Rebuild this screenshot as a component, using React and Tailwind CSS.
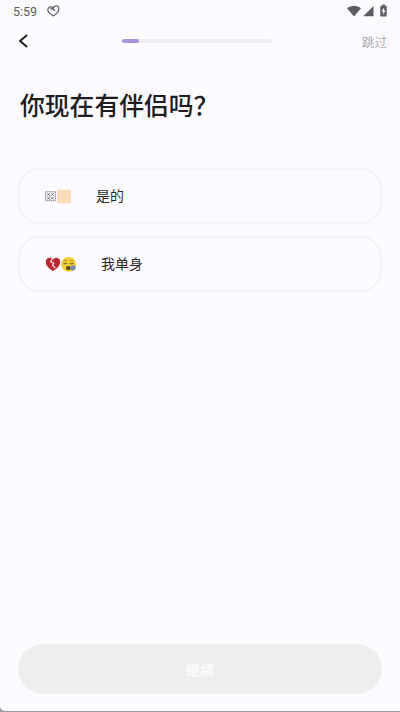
import React from 'react';

function StatusBar() {
  return (
    <div className="flex h-[22px] items-center pl-[13px] pr-[12px] text-[#5c5b5e]">
      <span className="relative top-px font-[Roboto,sans-serif] text-[12.5px] leading-[22px]">5:59</span>
      <svg className="ml-[10px]" width="14" height="12" viewBox="0 0 14 12" fill="none" stroke="currentColor" strokeWidth="1.200" strokeLinecap="round" strokeLinejoin="round">
        <path d="M3.800 3.300C4.600 4.700 5.900 4.300 5.600 2.700C5.200 1.400 3.200 1.400 1.800 2.700C.2 4.400.700 6.500 2.300 7.900C3.500 8.900 4.800 9.800 6.200 10.900C8.800 9.500 11.900 6.900 11.900 3.600C11.900 1.500 10.200.600 8.500 1C6.800 1.400 5.900 2.600 6.100 4.200C6.300 5.200 7.200 5.600 7.700 5" />
      </svg>
      <div className="ml-auto flex items-center">
        <svg width="14" height="12" viewBox="0 0 14 12" fill="currentColor">
          <path d="M0 3.300C4-.2 10-.2 14 3.300L7 11.500Z" />
        </svg>
        <svg className="ml-[2px]" width="11" height="12" viewBox="0 0 11 12" fill="currentColor">
          <path d="M10.500 1V11.300H.3Z" />
        </svg>
        <svg className="ml-[6px] -mt-px" width="8" height="13" viewBox="0 0 8 13">
          <path d="M2.200.5H4.800V1.700H6Q6.700 1.700 6.700 2.400V11.700Q6.700 12.400 6 12.400H1Q.3 12.400.3 11.700V2.400Q.3 1.700 1 1.700H2.200Z" fill="currentColor" />
          <path d="M4.100 3.400L1.600 7.600H3.100V10.700L5.500 6.400H4.100Z" fill="#fdfbff" />
        </svg>
      </div>
    </div>
  );
}

function CoupleIcon() {
  return (
    <svg className="shrink-0" width="26" height="16" viewBox="0 0 26 16">
      <rect x=".5" y="3.700" width="10" height="9" fill="none" stroke="#77767a" strokeWidth=".8" strokeDasharray="1.500 .5" />
      <path d="M2 4.800L5 7.900M5 4.800L2 7.900M6 4.800L9 7.900M9 4.800L6 7.900M2 8.500L5 11.600M5 8.500L2 11.600M6 8.500L9 11.600M9 8.500L6 11.600" stroke="#656468" strokeWidth=".8" fill="none" />
      <rect x="12.100" y="1.700" width="13.900" height="13.700" rx=".5" fill="#fbdcb9" />
    </svg>
  );
}

function SingleIcon() {
  return (
    <svg className="shrink-0" width="31" height="16" viewBox="0 0 31 16">
      <path d="M8 15.300C4.500 13 .8 9.800.8 5.800C.8 1.500 5.900.4 8 3.500C10.100.4 15.200 1.500 15.200 5.800C15.200 9.800 11.500 13 8 15.300Z" fill="#bd2932" />
      <path d="M7.200 2.700L5.600 5.700L8.900 7.200L7.500 9.400L10.300 12" stroke="#f9e9ed" strokeWidth="1.200" fill="none" strokeLinejoin="round" />
      <circle cx="23.600" cy="8.300" r="7.400" fill="#f4ce36" />
      <path d="M18.800 7.500Q20.200 8.800 21.900 7.500M25.100 7.500Q26.700 8.800 28.300 7.500" stroke="#66511d" strokeWidth="1" fill="none" strokeLinecap="round" />
      <path d="M19.200 5.100L21.500 4.200M25.700 4.200L28 5.100" stroke="#a37a20" strokeWidth=".8" strokeLinecap="round" />
      <ellipse cx="23.400" cy="12" rx="2.500" ry="2" fill="#594719" />
      <path d="M25 11.200C26 8.800 30.700 8.300 30.800 11.500C30.900 14.500 26.700 15.300 25.300 13.200Z" fill="#778cae" />
    </svg>
  );
}

function Option({ icon, label }) {
  return (
    <button className="flex h-[56px] w-full items-center gap-[25px] rounded-[21px] border-2 border-[#f4f3f6] pl-[25px] text-left text-[14px] leading-5 text-[#29282b]">
      {icon}
      <span className="relative -top-px">{label}</span>
    </button>
  );
}

export default function App() {
  return (
    <div className="h-[712px] w-[400px] overflow-hidden bg-[#9b9a9d] font-['Noto_Sans_CJK_SC',sans-serif]">
      <main className="flex h-[711px] flex-col rounded-bl-[5px] bg-[#fdfbff]">
        <StatusBar />
        <header className="flex h-[38px] items-center pl-[18px] pr-[13px]">
          <svg width="10" height="14" viewBox="0 0 10 14" fill="none" stroke="#171619" strokeWidth="1.800" strokeLinecap="round" strokeLinejoin="round">
            <path d="M8.600 1.500L2 7L8.600 12.500" />
          </svg>
          <div className="ml-[93.500px] h-[4px] w-[150px] rounded-full bg-[#efedf0]">
            <div className="h-[4px] w-[17px] rounded-full bg-[#a993db]" />
          </div>
          <span className="ml-auto pt-px text-[12.500px] font-light leading-5 text-[#858488]">跳过</span>
        </header>
        <h1 className="mt-[26px] pl-[20px] text-[24.800px] font-medium leading-[36px] text-[#1d1c1f]">你现在有伴侣吗？</h1>
        <div className="mt-[46px] flex flex-col gap-3 px-[18px]">
          <Option icon={<CoupleIcon />} label="是的" />
          <Option icon={<SingleIcon />} label="我单身" />
        </div>
        <div className="mt-auto px-[18px] pb-[17px]">
          <button className="flex h-[50px] w-full items-center justify-center rounded-full bg-[#eeeeee] pt-px text-[14px] font-bold text-[#fcfcfc]">继续</button>
        </div>
      </main>
    </div>
  );
}
